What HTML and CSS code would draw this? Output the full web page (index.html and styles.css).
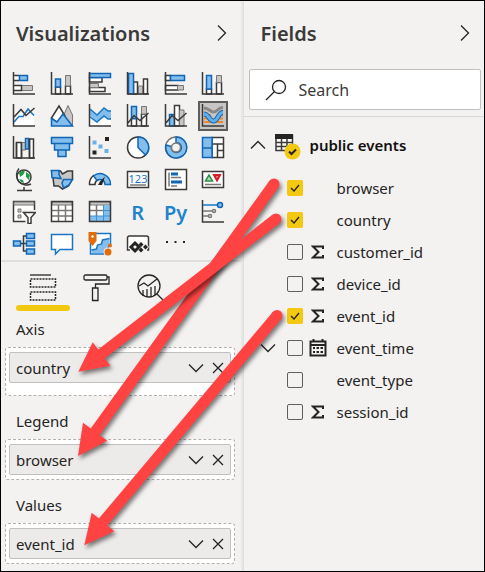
FILE: index.html
```html
<!DOCTYPE html>
<html lang="en">
<head>
<meta charset="utf-8">
<title>Visualizations and Fields</title>
<link rel="stylesheet" href="styles.css">
</head>
<body>
<main class="frame">
  <section class="panel visuals">
    <header class="panel-head">
      <h2>Visualizations</h2>
      <button class="plain" aria-label="Collapse visualizations"><svg width="10" height="18" viewBox="0 0 10 18"><path class="ln" d="M1 1.500l7.500 7.500L1 16.500"/></svg></button>
    </header>

    <div class="gallery">
      <button aria-label="Stacked bar chart"><svg viewBox="0 0 24 24"><path class="w" d="M1.500 4h5v4h-5zM1.500 14h8v4h-8z"/><path class="b" d="M7.500 3.500h8v5h-8z"/><path class="g" d="M9.500 13.500h11v5h-11z"/><path class="k" d="M1.500 0v22H23M1.500 3.500h5.500M1.500 8.500h5.500M1.500 13.500h8v5h-8"/></svg></button>
      <button aria-label="Stacked column chart"><svg viewBox="0 0 24 24"><path class="w k1" d="M5.500 15h5v7h-5zM15.500 14h5v8h-5z"/><path class="b" d="M5.500 7h5v8h-5z"/><path class="g" d="M15.500 3.500h5V14h-5z"/><path class="k" d="M1.500 0v22H23"/></svg></button>
      <button aria-label="Clustered bar chart"><svg viewBox="0 0 24 24"><path class="w k1" d="M1.500 5.500H14v4.500H1.500zM1.500 15.500H17v4H1.500z"/><path class="g" d="M1.500 11.500h9v4h-9z"/><path class="b" d="M1.500 1.500h21v4h-21z"/><path class="k" d="M1.500 0v22H23"/></svg></button>
      <button aria-label="Clustered column chart"><svg viewBox="0 0 24 24"><path class="w k1" d="M7.500 10h4v12h-4zM17.500 7h4v15h-4z"/><path class="g" d="M12.500 14h4v8h-4z"/><path class="b" d="M2.500 1.500h5V22h-5z"/><path class="k" d="M1.500 0v22H23"/></svg></button>
      <button aria-label="100% stacked bar chart"><svg viewBox="0 0 24 24"><path class="w k1" d="M1.500 3.500h5v5h-5zM1.500 13.500H14v4.500H1.500z"/><path class="b" d="M6.500 3.500h14v5h-14z"/><path class="g" d="M13.500 13.500h6v4.500h-6z"/><path class="k" d="M1.500 0v22H23"/></svg></button>
      <button aria-label="100% stacked column chart"><svg viewBox="0 0 24 24"><path class="w k1" d="M5.500 17h5v5h-5zM15.500 10.500h5V22h-5z"/><path class="b" d="M5.500 3.500h5V17h-5z"/><path class="g" d="M15.500 3.500h5v7h-5z"/><path class="k" d="M1.500 0v22H23"/></svg></button>

      <button aria-label="Line chart"><svg viewBox="0 0 24 24"><path class="w" d="M2 19L9 8l5 6 8-3v11H2z"/><path class="bl" d="M2 18l5-5.500 4 0L16 5l6 6.500"/><path class="k" d="M1.500 0v22H23M2 13l7-7.500 5 6L22.500 4"/></svg></button>
      <button aria-label="Area chart"><svg viewBox="0 0 24 24"><path class="g" d="M12.500 14L18 1.500l4.500 9.500v11z"/><path class="w k1" d="M1.500 14L9 2l6 10-7 7z"/><path class="b" d="M1.500 22v-7.500L7 18l6-8 9.500 12z"/></svg></button>
      <button aria-label="Stacked area chart"><svg viewBox="0 0 24 24"><path class="w" d="M2 12h21v10H2z"/><path class="bf" d="M2 5l7 6 7-7 7 4v8l-7-3.500-7 5.500-7-6z"/><path class="bl" d="M2 5l7 6 7-7 4 3h3M2 13l7 5 7-6 4 3 3 0"/><path class="k" d="M1.500 0v22H23"/></svg></button>
      <button aria-label="Line and stacked column chart"><svg viewBox="0 0 24 24"><path class="w k1" d="M5.500 14.500h5V22h-5zM15.500 10h5v12h-5z"/><path class="b" d="M5.500 2.500h5v12h-5z"/><path class="g" d="M15.500 2.500h5V10h-5z"/><path class="k" d="M1.500 0v22H23M2 19l6-7.500 6 5L22.500 9"/></svg></button>
      <button aria-label="Line and clustered column chart"><svg viewBox="0 0 24 24"><path class="b" d="M5.500 10.500h5V22h-5z"/><path class="w k1" d="M10.500 1.500h5V22h-5z"/><path class="g" d="M15.500 6h4.500v16h-4.500z"/><path class="k" d="M1.500 0v22H23M2 19l6-7.500 6 5L22.500 9"/></svg></button>
      <button class="selected" aria-label="Ribbon chart"><svg viewBox="0 0 24 24"><path class="or" d="M3 11h7M16 11h6M3 18h19M3 14.500h4M18 14.500h4"/><path class="rg" d="M3 4c5 0 6 4 9.500 4S17 3.500 22 3.500"/><path class="rb" d="M3 10c5 0 5 7 9.500 7S17 8.500 22 8.500"/><path class="rl" d="M3 10c5 0 5 7 9.500 7S17 8.500 22 8.500"/><path class="k" d="M1.500 0v22H23"/></svg></button>

      <button aria-label="Waterfall chart"><svg viewBox="0 0 24 24"><path class="w k1" d="M4.500 6.500h5V22h-5zM17.500 3h4v19h-4z"/><path class="g" d="M9.500 6.500h4V14h-4z"/><path class="b" d="M13.500 2.500h3V13h-3z"/><path class="k" d="M1.500 0v22H23M4.500 6.500V22M9.500 6.500V22M17.500 2.500V22"/></svg></button>
      <button aria-label="Funnel"><svg viewBox="0 0 24 24"><path class="b" d="M1.500 1.500h21v6h-21zM4.500 7.500h15V14h-15zM8 14h8v6.500H8z"/></svg></button>
      <button aria-label="Scatter chart"><svg viewBox="0 0 24 24"><path class="k" d="M1.500 0v22H23"/><path class="sq" d="M17 1h4v4h-4zM4.500 14.500h4v4h-4z"/><path class="sb" d="M4.500 4.500h4v4h-4zM10.500 8.500h4v4h-4zM16.500 13h4v4h-4z"/></svg></button>
      <button aria-label="Pie chart"><svg viewBox="0 0 24 24"><circle class="w k" cx="12" cy="11.500" r="10.500"/><path class="b" d="M12 11.500V1a10.500 10.500 0 0 1 7.500 18z"/></svg></button>
      <button aria-label="Donut chart"><svg viewBox="0 0 24 24"><circle class="w gl" cx="12" cy="11.500" r="10.500"/><path class="b" d="M12 1a10.500 10.500 0 1 1-10 8l5.500 1.500a5 5 0 1 0 4.500-4z"/><circle class="page gl" cx="12" cy="11.500" r="4.500"/></svg></button>
      <button aria-label="Treemap"><svg viewBox="0 0 24 24"><path class="w k" d="M11 1.500h11.500v20H11zM11 8h11.500M16.500 8v13.500M16.500 14.500h6"/><path class="b" d="M1.500 1.500H11v20H1.500zM1.500 12H11"/></svg></button>

      <button aria-label="Map"><svg viewBox="0 0 24 24"><circle class="w k1" cx="12" cy="9" r="7"/><path class="gr" d="M7 5l4-2.500 2 1-2 3.500-3 2zM14 4l4 3-1 5-3-3zM7 11l4 1 1 3-3-1z"/><path class="k" d="M7 0.500A10 10 0 0 0 19 16M12 19v3M5 22.500h15"/></svg></button>
      <button aria-label="Filled map"><svg viewBox="0 0 24 24"><path class="g k1" d="M1.500 3h9l2 3 5-3h5v8l-4 7-6 3-4-3H4l-1-8z"/><path class="b" d="M1.500 2.500H9v4l2 4-9-1zM13.500 11.500h9l-3.500 5.500-5.500 3-1.500-5z"/></svg></button>
      <button aria-label="Gauge"><svg viewBox="0 0 24 24"><path class="w k1" d="M1.500 16.500a10.500 10.500 0 0 1 4-9l4 4.500a5 5 0 0 0-2.500 4.500z"/><path class="b" d="M5.500 8a10.500 10.500 0 0 1 17 8.500H17a5 5 0 0 0-8-4z"/><path class="needle" d="M17 8.500L14 17h-4l2-3.500z"/></svg></button>
      <button aria-label="Card"><svg viewBox="0 0 24 24"><path class="w k" d="M1.500 3.500h21v16h-21z"/><text x="12" y="14.500" text-anchor="middle" class="num">123</text><path class="gl" d="M4 17h16"/></svg></button>
      <button aria-label="Multi-row card"><svg viewBox="0 0 24 24"><path class="w k" d="M1.500 1.500h21v20h-21z"/><path class="gl" d="M5 4.500v14M7 9.500h10M7 18h6"/><path class="thick" d="M7 6h7M7 14h11"/></svg></button>
      <button aria-label="KPI"><svg viewBox="0 0 24 24"><path class="w k" d="M1.500 3.500h21v16h-21z"/><path class="up" d="M4.500 13L8 7l3.500 6z"/><path class="down" d="M13 7h6l-3 5.500z"/><path class="gl" d="M4 16.500h16"/></svg></button>

      <button aria-label="Slicer"><svg viewBox="0 0 24 24"><path class="w k" d="M1.500 1.500h21v20h-21z"/><path class="g" d="M2 2h20v3H2z"/><path class="g" d="M6 9h3v3H6zM6 15h3v3H6z"/><path class="page" d="M11 10h13v14H14z"/><path class="w k" d="M11.500 12.500h12l-4.500 5v6h-3v-6z"/></svg></button>
      <button aria-label="Table"><svg viewBox="0 0 24 24"><path class="w" d="M1.500 1.500h21v20h-21z"/><path class="g" d="M2 2h20v3H2z"/><path class="gl" d="M8.500 5v16M15.500 5v16M2 10.500h20M2 16h20"/><path class="k" d="M1.500 1.500h21v20h-21z"/></svg></button>
      <button aria-label="Matrix"><svg viewBox="0 0 24 24"><path class="w" d="M1.500 1.500h21v20h-21z"/><path class="g" d="M2 2h20v3H2z"/><path class="bf" d="M15.500 5h6.500v16H2v-5h13.500z"/><path class="gl" d="M8.500 5v11M2 10.500h13"/><path class="bl1" d="M15.500 5v16M8.500 16v5M2 16h20M15.500 10.500h6.500"/><path class="k" d="M1.500 1.500h21v20h-21z"/></svg></button>
      <button class="word" aria-label="R script visual">R</button>
      <button class="word" aria-label="Python visual">Py</button>
      <button aria-label="Key influencers"><svg viewBox="0 0 24 24"><path class="k" d="M1.500 0v22H23"/><path class="bl" d="M2 5h14"/><path class="gl" d="M2 11h9M2 16h5"/><circle class="b" cx="19" cy="5" r="2.500"/><circle class="w gl" cx="13" cy="11" r="1.500"/><circle class="w gl" cx="9" cy="16" r="1.500"/></svg></button>

      <button aria-label="Decomposition tree"><svg viewBox="0 0 24 24"><path class="k" d="M9 11.500h6M15 4h-3.500v15H15"/><path class="b" d="M1.500 9h7v5h-7zM14.500 1.500h8v5h-8zM14.500 9h8v5h-8zM14.500 17h8v5h-8z"/></svg></button>
      <button aria-label="Q&amp;A"><svg viewBox="0 0 24 24"><path class="w bl" d="M1.500 2.500h21v15H10L5.500 22v-4.500h-4z"/></svg></button>
      <button aria-label="ArcGIS map"><svg viewBox="0 0 24 24"><path class="w bl" d="M3 1.500h19.500v10L16 22H2.500V12z"/><path class="bf" d="M21.500 7v5L16 21H3.500v-3l5-1 1-4 4-1 1-4z"/><path class="bl" d="M3.500 18l5-1 1-4 4-1 1-4 7-1.500"/><path class="of" d="M0.500 0h8v9l-4 5-4-5z"/><circle class="w" cx="4.500" cy="4.500" r="1.200"/><circle class="page" cx="20" cy="20" r="4.500"/><circle class="of" cx="20" cy="20" r="3.500"/><circle class="of" cx="22" cy="13.500" r="2"/></svg></button>
      <button aria-label="Power Apps"><svg viewBox="0 0 24 24"><path class="w k" d="M4 18H1.500V6q0-2 2-2h17q2 0 2 2v12H21"/><path class="page" d="M5 15l4-5h10l4 5-5 6H9z"/><path class="dia" d="M9 11l4 4-4 4-4-4z"/><path class="sq" d="M15 10l2.500 2.500L15 15l-2.500-2.500zM19.500 12.500l2.500 2.500-2.500 2.500L17 15zM15 15.500l2.500 2.500-2.500 2.500-2.500-2.500z"/></svg></button>
      <button aria-label="More visuals"><svg viewBox="0 0 24 24"><path class="sq" d="M2 9h2v2H2zM10.500 9h2v2h-2zM19 9h2v2h-2z"/></svg></button>
    </div>

    <nav class="tabs">
      <button class="tab active" aria-label="Fields"><svg width="28" height="28" viewBox="0 0 28 28"><path class="ln" d="M1 1h21"/><path class="dash" d="M1.500 5h25v8h-25zM1.500 18h25v8h-25z"/></svg></button>
      <button class="tab" aria-label="Format"><svg width="28" height="28" viewBox="0 0 28 28"><path class="ln" d="M2.500 1h20q1.500 0 1.500 1.500v2Q24 6 22.500 6h-20Q1 6 1 4.500v-2Q1 1 2.500 1zM24 3h2v7H12.500v4M9.500 14h5.500v12.500H9.500z"/></svg></button>
      <button class="tab" aria-label="Analytics"><svg width="28" height="28" viewBox="0 0 28 28"><circle class="ln" cx="12" cy="12" r="11"/><path class="ln" d="M20 20l7 7M2 12l5-3 4 3 9-7M6 22v-6M10 23v-8M14 23V13M18 21v-9"/></svg></button>
    </nav>

    <div class="bucket">
      <h3>Axis</h3>
      <div class="well roomy"><div class="pill"><span>country</span>
        <button class="plain" aria-label="country options"><svg width="16" height="10" viewBox="0 0 16 10"><path class="ln" d="M1 1.500l7 7 7-7"/></svg></button>
        <button class="plain" aria-label="Remove country"><svg width="12" height="12" viewBox="0 0 12 12"><path class="ln" d="M1 1l10 10M11 1L1 11"/></svg></button></div></div>
    </div>
    <div class="bucket">
      <h3>Legend</h3>
      <div class="well"><div class="pill"><span>browser</span>
        <button class="plain" aria-label="browser options"><svg width="16" height="10" viewBox="0 0 16 10"><path class="ln" d="M1 1.500l7 7 7-7"/></svg></button>
        <button class="plain" aria-label="Remove browser"><svg width="12" height="12" viewBox="0 0 12 12"><path class="ln" d="M1 1l10 10M11 1L1 11"/></svg></button></div></div>
    </div>
    <div class="bucket">
      <h3>Values</h3>
      <div class="well"><div class="pill"><span>event_id</span>
        <button class="plain" aria-label="event_id options"><svg width="16" height="10" viewBox="0 0 16 10"><path class="ln" d="M1 1.500l7 7 7-7"/></svg></button>
        <button class="plain" aria-label="Remove event_id"><svg width="12" height="12" viewBox="0 0 12 12"><path class="ln" d="M1 1l10 10M11 1L1 11"/></svg></button></div></div>
    </div>
  </section>

  <section class="panel fields">
    <header class="panel-head">
      <h2>Fields</h2>
      <button class="plain" aria-label="Collapse fields"><svg width="10" height="18" viewBox="0 0 10 18"><path class="ln" d="M1 1.500l7.500 7.500L1 16.500"/></svg></button>
    </header>
    <div class="search-area">
      <label class="search">
        <svg width="22" height="22" viewBox="0 0 22 22"><circle class="ln" cx="14" cy="8" r="6.500"/><path class="ln" d="M9.500 12.500L1 21"/></svg>
        <input type="text" placeholder="Search" aria-label="Search">
      </label>
    </div>
    <div class="table-row">
      <button class="plain" aria-label="Collapse public events"><svg width="16" height="10" viewBox="0 0 16 10"><path class="ln" d="M1 8.500l7-7 7 7"/></svg></button>
      <svg class="table-icon" width="26" height="26" viewBox="0 0 26 26"><path class="w" d="M1 1h16v15H1z"/><path class="k" d="M1 1.500h16.500v15H1zM6.500 4v12M12 4v12M1 8.500h16M1 12.500h16"/><path class="sq" d="M0 0h18v5H0z"/><circle class="badge" cx="17.500" cy="17.500" r="8"/><path class="tick" d="M14 17.500l2.500 2.500 4.500-4.500"/></svg>
      <span>public events</span>
    </div>
    <ul class="list">
      <li><input type="checkbox" id="f1" checked><i></i><label for="f1">browser</label></li>
      <li><input type="checkbox" id="f2" checked><i></i><label for="f2">country</label></li>
      <li><input type="checkbox" id="f3"><i><svg width="14" height="14" viewBox="0 0 14 14"><path class="sigma" d="M12 4V1.500H2L7.500 7 2 12.500h10V10"/></svg></i><label for="f3">customer_id</label></li>
      <li><input type="checkbox" id="f4"><i><svg width="14" height="14" viewBox="0 0 14 14"><path class="sigma" d="M12 4V1.500H2L7.500 7 2 12.500h10V10"/></svg></i><label for="f4">device_id</label></li>
      <li><input type="checkbox" id="f5" checked><i><svg width="14" height="14" viewBox="0 0 14 14"><path class="sigma" d="M12 4V1.500H2L7.500 7 2 12.500h10V10"/></svg></i><label for="f5">event_id</label></li>
      <li><button class="plain expand" aria-label="Expand event_time"><svg width="16" height="10" viewBox="0 0 16 10"><path class="ln" d="M1 1.500l7 7 7-7"/></svg></button><input type="checkbox" id="f6"><i><svg width="18" height="18" viewBox="0 0 18 18"><path class="cal" d="M1.500 2.500h15v14h-15zM1 6h16M4.500 0v3M13.500 0v3"/><path class="sq" d="M7.500 8h2.500v2H7.500zM11.500 8H14v2h-2.500zM4 8h2v2H4zM4 12h2v2H4zM7.500 12h2.500v2H7.500zM11.500 12H14v2h-2.500z"/></svg></i><label for="f6">event_time</label></li>
      <li><input type="checkbox" id="f7"><i></i><label for="f7">event_type</label></li>
      <li><input type="checkbox" id="f8"><i><svg width="14" height="14" viewBox="0 0 14 14"><path class="sigma" d="M12 4V1.500H2L7.500 7 2 12.500h10V10"/></svg></i><label for="f8">session_id</label></li>
    </ul>
  </section>

  <svg class="arrows" width="485" height="572" viewBox="0 0 485 572" aria-hidden="true">
    <g><circle cx="274" cy="184" r="5.500"/><path d="M269.500 180.800L278.500 187.200L99.700 435L107.300 440.700L78 456L83 422.700L90.700 428.400Z"/></g>
    <g><circle cx="276" cy="219" r="5.500"/><path d="M272.700 214.600L279.300 223.400L104.900 358.300L110.300 365.700L78.300 371.700L92.700 342.300L98.200 349.500Z"/></g>
    <g><circle cx="277" cy="315.500" r="5.500"/><path d="M272.800 311.900L281.200 319L107.300 525.500L114.300 531.300L84.300 545.300L91.700 512.700L98.900 518.500Z"/></g>
  </svg>
</main>
</body>
</html>
```
FILE: styles.css
```css
* { box-sizing: border-box; }
body {
  margin: 0;
  font-family: "Noto Sans", "Open Sans", sans-serif;
  font-size: 15px;
  color: #252423;
}
h2, h3, ul { margin: 0; padding: 0; font-weight: 400; }
button { font: inherit; color: inherit; }
svg { display: block; fill: none; }

.frame {
  position: relative;
  display: grid;
  grid-template-columns: minmax(0, 1fr) minmax(0, 1fr);
  min-height: 100vh;
  border: 1px solid #000;
  background: #f3f2f1;
}
.visuals { border-right: 2px solid #e9e7e6; }
.fields { border-left: 1px solid #e1dfdd; }

.plain { padding: 0; border: 0; background: none; }

.panel-head {
  display: flex;
  align-items: center;
  justify-content: space-between;
  height: 64px;
  padding: 0 14px 0 15px;
}
.panel-head h2 { font-size: 20px; font-weight: 600; color: #3b3a39; }
.fields .panel-head { padding: 0 14px 0 17px; }

.gallery {
  display: grid;
  grid-template-columns: repeat(6, 30px);
  grid-auto-rows: 30px;
  justify-content: space-between;
  row-gap: 2px;
  padding: 4px 12px 1px 8px;
}
.gallery button {
  display: flex;
  align-items: center;
  justify-content: center;
  padding: 0;
  border: 0;
  background: none;
}
.gallery svg { width: 24px; height: 24px; }
.gallery .selected { border: 2px solid #5f5d5b; background: #c8c6c4; }
.gallery .word { font-size: 20px; font-weight: 600; color: #1e84cc; }

.w { fill: #fff; }
.k, .k1 { stroke: #3b3a39; stroke-width: 1.500; }
.b { fill: #83beec; stroke: #1066b5; stroke-width: 1.500; }
.bf { fill: #83beec; }
.bl { stroke: #1976c5; stroke-width: 1.500; }
.bl1 { stroke: #3f93d5; }
.g { fill: #c8c6c4; stroke: #797775; }
.g.k1 { stroke: #3b3a39; }
.gl { stroke: #797775; stroke-width: 1.500; }
.page { fill: #f3f2f1; }
.sq { fill: #252423; }
.sb { fill: #6cb0e4; }
.or { stroke: #f08a24; stroke-width: 2; }
.rg { stroke: #8a8886; stroke-width: 3; }
.rb { stroke: #1066b5; stroke-width: 5; }
.rl { stroke: #63aee8; stroke-width: 3; }
.gr { fill: #1f9d45; }
.needle { fill: #252423; }
.num { font-size: 11px; fill: #1976c5; }
.thick { stroke: #1066b5; stroke-width: 3; }
.up { fill: #b8e0bf; stroke: #2b9346; stroke-width: 1.500; }
.down { fill: #f08080; stroke: #d11f2a; stroke-width: 2; }
.of { fill: #e06c0a; }
.dia { stroke: #252423; stroke-width: 3; }
.ln { stroke: #252423; stroke-width: 1.300; }
.dash { stroke: #252423; stroke-width: 1.500; stroke-dasharray: 2 1; }

.tabs {
  display: flex;
  padding: 9px 15px 0;
  border-top: 2px solid #e1dfdd;
}
.tab {
  width: 54px;
  height: 40px;
  padding: 2px 13px 8px;
  border: 0;
  background: none;
}
.tab.active {
  position: relative;
}
.tab.active::after {
  content: "";
  position: absolute;
  inset: auto 0 0;
  height: 6px;
  border-radius: 3px;
  background: #f2c811;
}

.bucket { padding: 0 6px 7px 4px; }
.bucket:last-child { padding-bottom: 4px; }
.bucket h3 { padding-left: 11px; font-size: 15px; line-height: 36px; }
.well {
  padding: 4px 3px;
  border: 1px dashed #b3b0ad;
  border-radius: 3px;
  background: #fff;
}
.roomy { padding-bottom: 12px; }
.pill {
  display: flex;
  align-items: center;
  gap: 8px;
  height: 31px;
  padding: 0 6px;
  border: 1px solid #c2c0be;
  border-radius: 2px;
  background: #edebe9;
}
.pill span { flex: 1; }

.search-area { padding: 4px 3px 6px 5px; border-bottom: 1px solid #d9d7d5; }
.search {
  display: flex;
  align-items: center;
  gap: 12px;
  height: 41px;
  padding: 0 15px;
  border: 1px solid #c2c0be;
  border-radius: 2px;
  background: #fff;
}
.search svg { flex: none; }
.search input {
  width: 100%;
  min-width: 0;
  padding: 0;
  border: 0;
  outline: 0;
  background: none;
  font: inherit;
  font-size: 16px;
}
.search input::placeholder { color: #3b3a39; opacity: 1; }

.table-row {
  display: flex;
  align-items: center;
  gap: 9px;
  height: 55px;
  padding-left: 6px;
  font-weight: 600;
}
.table-icon { margin-top: 4px; }
.table-row span { color: #11100f; }

.list { list-style: none; }
.list li {
  position: relative;
  display: flex;
  align-items: center;
  height: 32px;
  padding-left: 43px;
}
.list input {
  appearance: none;
  width: 16px;
  height: 16px;
  margin: 0 6px 0 0;
  border: 1px solid #605e5c;
  border-radius: 2px;
}
.list input:checked {
  border-color: #f2c811;
  background: #f2c811 url("data:image/svg+xml,%3Csvg xmlns='http://www.w3.org/2000/svg' viewBox='0 0 14 14'%3E%3Cpath d='M3 7l3 3 5-6' fill='none' stroke='%23252423' stroke-width='1.300'/%3E%3C/svg%3E") center / 14px no-repeat;
}
.list i { display: flex; justify-content: center; width: 18px; margin-right: 10px; }
.expand { position: absolute; left: 16px; }
.sigma { stroke: #252423; stroke-width: 2; }
.cal { stroke: #252423; stroke-width: 2; }
.badge { fill: #f2c811; }
.tick { stroke: #252423; stroke-width: 2; }

.arrows {
  position: absolute;
  top: -1px;
  left: -1px;
  pointer-events: none;
}
.arrows g { fill: #ff4343; filter: drop-shadow(2px 3px 2px rgb(0 0 0 / 50%)); }
```
